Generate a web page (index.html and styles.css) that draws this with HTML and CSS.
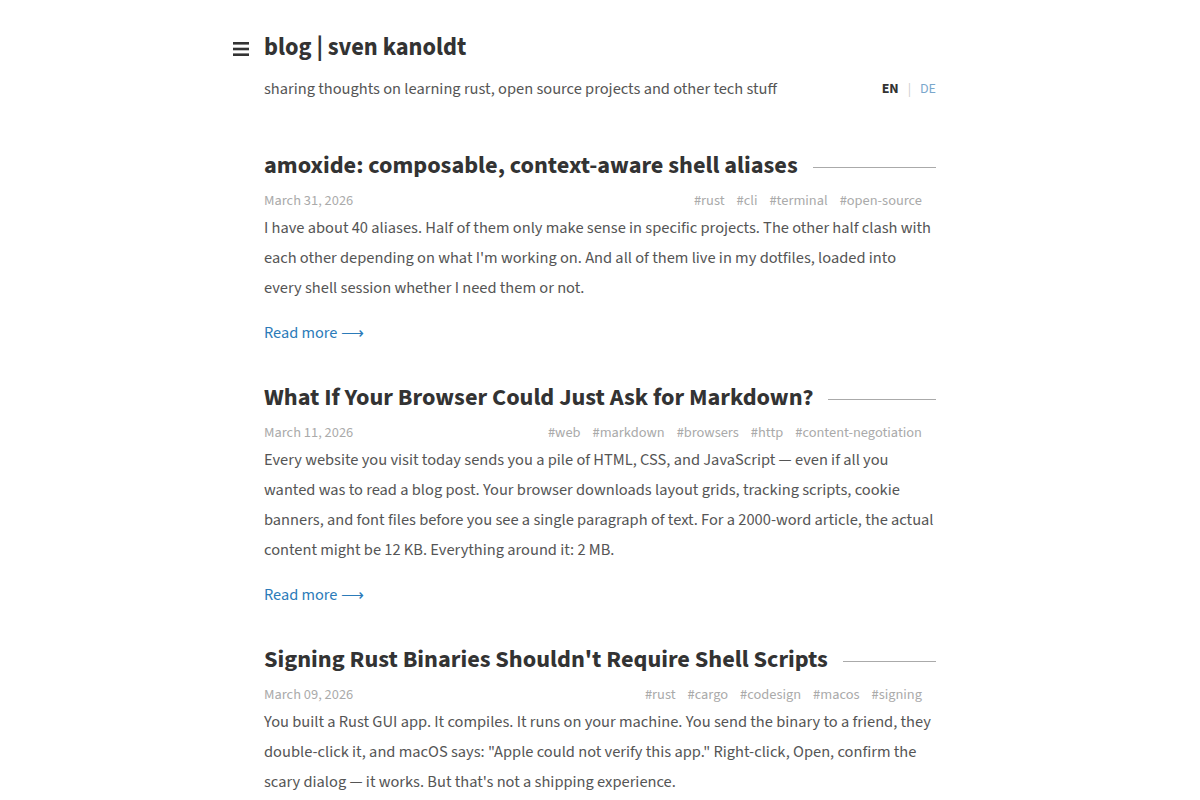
FILE: index.html
```html
<!DOCTYPE html>
<html lang="en">
<head>
    <meta charset="UTF-8">
    <meta name="viewport" content="width=device-width, initial-scale=1.0">
    <title>blog | sven kanoldt</title>
    <link rel="stylesheet" href="styles.css">
</head>
<body>
    <div class="page">
        <header class="site-header">
            <div class="brand">
                <button class="menu" aria-label="menu">
                    <svg width="16" height="14" viewBox="0 0 16 14">
                        <rect x="0" y="0" width="16" height="2.6" fill="#333"/>
                        <rect x="0" y="5.7" width="16" height="2.6" fill="#333"/>
                        <rect x="0" y="11.4" width="16" height="2.6" fill="#333"/>
                    </svg>
                </button>
                <h1 class="site-title">blog | sven kanoldt</h1>
            </div>
            <div class="sub">
                <p class="tagline">sharing thoughts on learning rust, open source projects and other tech stuff</p>
                <div class="lang">
                    <span class="active">EN</span>
                    <span class="sep">|</span>
                    <a href="#">DE</a>
                </div>
            </div>
        </header>

        <main class="posts">
            <article class="post">
                <h2 class="post-title"><span>amoxide: composable, context-aware shell aliases</span></h2>
                <div class="meta">
                    <span class="date">March 31, 2026</span>
                    <span class="tags">
                        <a href="#">#rust</a>
                        <a href="#">#cli</a>
                        <a href="#">#terminal</a>
                        <a href="#">#open-source</a>
                    </span>
                </div>
                <p class="summary">I have about 40 aliases. Half of them only make sense in specific projects. The other half clash with each other depending on what I'm working on. And all of them live in my dotfiles, loaded into every shell session whether I need them or not.</p>
                <a class="more" href="#">Read more ⟶</a>
            </article>

            <article class="post">
                <h2 class="post-title"><span>What If Your Browser Could Just Ask for Markdown?</span></h2>
                <div class="meta">
                    <span class="date">March 11, 2026</span>
                    <span class="tags">
                        <a href="#">#web</a>
                        <a href="#">#markdown</a>
                        <a href="#">#browsers</a>
                        <a href="#">#http</a>
                        <a href="#">#content-negotiation</a>
                    </span>
                </div>
                <p class="summary">Every website you visit today sends you a pile of HTML, CSS, and JavaScript — even if all you wanted was to read a blog post. Your browser downloads layout grids, tracking scripts, cookie banners, and font files before you see a single paragraph of text. For a 2000-word article, the actual content might be 12 KB. Everything around it: 2 MB.</p>
                <a class="more" href="#">Read more ⟶</a>
            </article>

            <article class="post">
                <h2 class="post-title"><span>Signing Rust Binaries Shouldn't Require Shell Scripts</span></h2>
                <div class="meta">
                    <span class="date">March 09, 2026</span>
                    <span class="tags">
                        <a href="#">#rust</a>
                        <a href="#">#cargo</a>
                        <a href="#">#codesign</a>
                        <a href="#">#macos</a>
                        <a href="#">#signing</a>
                    </span>
                </div>
                <p class="summary">You built a Rust GUI app. It compiles. It runs on your machine. You send the binary to a friend, they double-click it, and macOS says: "Apple could not verify this app." Right-click, Open, confirm the scary dialog — it works. But that's not a shipping experience.</p>
                <a class="more" href="#">Read more ⟶</a>
            </article>
        </main>
    </div>
</body>
</html>
```

FILE: styles.css
```css
* {
    margin: 0;
    padding: 0;
    box-sizing: border-box;
}
body {
    font-family: "Source Sans Pro", "Source Sans 3", Lato, "Noto Sans", sans-serif;
    color: #444;
    background: #fff;
}
a {
    text-decoration: none;
}
.page {
    width: 672px;
    margin-left: 264px;
    padding-top: 33px;
}
.brand {
    display: flex;
    align-items: center;
    margin-left: -31px;
    gap: 15px;
}
.menu {
    border: 0;
    background: none;
    display: flex;
    padding-top: 1px;
}
.site-title {
    font-size: 24.4px;
    font-weight: 700;
    color: #333;
    line-height: 30px;
}
.sub {
    display: flex;
    justify-content: space-between;
    align-items: center;
    margin-top: 16px;
    line-height: 20px;
}
.tagline {
    font-size: 16.4px;
    color: #555;
}
.lang {
    font-size: 14px;
    display: flex;
    gap: 9px;
}
.lang .active {
    font-weight: 700;
    color: #333;
}
.lang .sep {
    color: #ccc;
}
.lang a {
    color: #7aa7cc;
}
.posts {
    margin-top: 52px;
}
.post {
    margin-bottom: 40px;
}
.post-title {
    display: flex;
    align-items: center;
    gap: 15px;
    font-size: 24.3px;
    font-weight: 700;
    color: #333;
    line-height: 30px;
}
.post-title::after {
    content: "";
    flex: 1;
    height: 1px;
    background: #aaa;
    margin-top: 2px;
}
.meta {
    display: flex;
    justify-content: space-between;
    font-size: 14.4px;
    line-height: 20px;
    color: #aaa;
    margin-top: 10px;
    padding-right: 14px;
}
.tags {
    display: flex;
    gap: 12px;
}
.tags a {
    color: #aaa;
}
.summary {
    font-size: 16.4px;
    line-height: 30px;
    color: #555;
    margin-top: 2px;
}
.more {
    display: block;
    width: fit-content;
    margin-top: 20px;
    font-size: 16.3px;
    line-height: 20px;
    color: #2b7bb9;
}
```
